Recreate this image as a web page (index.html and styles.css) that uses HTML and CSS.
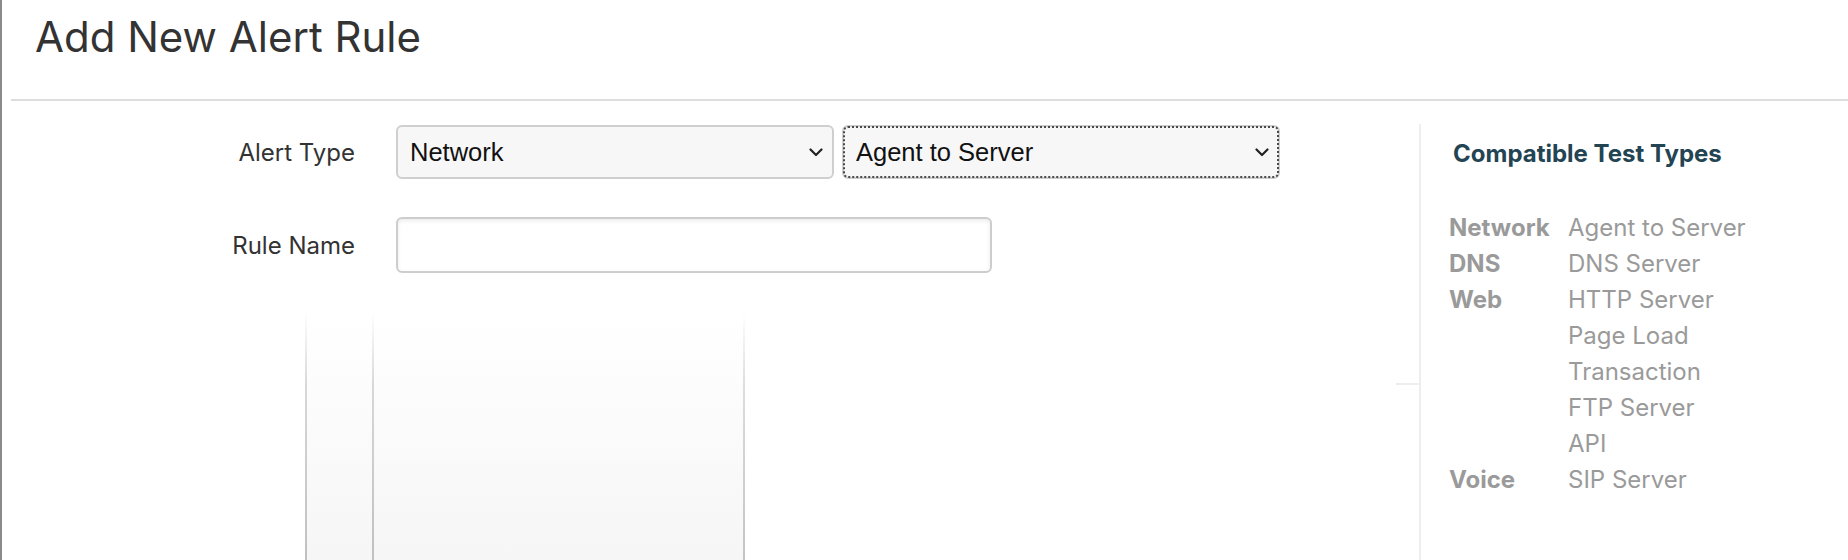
FILE: index.html
```html
<!DOCTYPE html>
<html>
<head>
<meta charset="utf-8">
<link rel="stylesheet" href="styles.css">
</head>
<body>
<div class="page">
  <header class="header">
    <h1 class="title">Add New Alert Rule</h1>
  </header>
  <div class="main">
    <div class="form-area">
      <div class="form-grid">
        <label class="label">Alert Type</label>
        <div class="selects">
          <div class="select-wrap">
            <select class="select"><option>Network</option></select>
            <svg class="chev" width="14" height="9" viewBox="0 0 14 9"><path d="M1.5 1.5 L7 7 L12.5 1.5" fill="none" stroke="#222" stroke-width="2.2" stroke-linecap="round" stroke-linejoin="round"/></svg>
          </div>
          <div class="select-wrap focused">
            <select class="select"><option>Agent to Server</option></select>
            <svg class="chev" width="14" height="9" viewBox="0 0 14 9"><path d="M1.5 1.5 L7 7 L12.5 1.5" fill="none" stroke="#222" stroke-width="2.2" stroke-linecap="round" stroke-linejoin="round"/></svg>
          </div>
        </div>
        <label class="label">Rule Name</label>
        <div><input class="text-input" type="text"></div>
      </div>
      <div class="lower">
        <div class="ghost-box">
          <div class="ghost-col narrow"></div>
          <div class="ghost-col wide"></div>
        </div>
        <div class="stub"></div>
      </div>
    </div>
    <aside class="panel">
      <h2 class="panel-title">Compatible Test Types</h2>
      <div class="types">
        <div class="cat">Network</div><div class="val">Agent to Server</div>
        <div class="cat">DNS</div><div class="val">DNS Server</div>
        <div class="cat">Web</div><div class="val">HTTP Server</div>
        <div class="cat"></div><div class="val">Page Load</div>
        <div class="cat"></div><div class="val">Transaction</div>
        <div class="cat"></div><div class="val">FTP Server</div>
        <div class="cat"></div><div class="val">API</div>
        <div class="cat">Voice</div><div class="val">SIP Server</div>
      </div>
    </aside>
  </div>
</div>
</body>
</html>
```

FILE: styles.css
```css
html, body {
  margin: 0;
  padding: 0;
  background: #fff;
  overflow: hidden;
}

body {
  font-family: "Liberation Sans", Arial, sans-serif;
  color: #333;
}

.page {
  border-left: 2px solid #8a8a8a;
  height: 560px;
  box-sizing: border-box;
  padding-left: 9px;
  display: flex;
  flex-direction: column;
}

.header {
  height: 101px;
  box-sizing: border-box;
  padding: 12px 0 0 24px;
  border-bottom: 2px solid #dddddd;
}

.title {
  margin: 0;
  font-family: Inter, "Liberation Sans", sans-serif;
  font-weight: 400;
  font-size: 42px;
  line-height: 50px;
  color: #333;
}

.main {
  flex: 1;
  display: flex;
  min-height: 0;
}

.form-area {
  flex: 1;
  display: flex;
  flex-direction: column;
  padding-top: 24px;
}

.form-grid {
  display: grid;
  grid-template-columns: 344px auto;
  column-gap: 41px;
  row-gap: 38px;
  align-items: center;
}

.label {
  text-align: right;
  font-family: Inter, "Liberation Sans", sans-serif;
  font-size: 24px;
  color: #333;
}

.selects {
  display: flex;
  gap: 8px;
}

.select-wrap {
  position: relative;
  width: 438px;
  height: 54px;
}

.select {
  -webkit-appearance: none;
  appearance: none;
  width: 100%;
  height: 100%;
  box-sizing: border-box;
  border: 2px solid #cfcfcf;
  border-radius: 6px;
  background: #f7f7f7;
  padding: 0 40px 0 12px;
  font-family: "Liberation Sans", Arial, sans-serif;
  font-size: 25.5px;
  color: #111;
  outline: none;
}

.focused .select {
  outline: 2px dotted #4a4a4a;
  outline-offset: -3px;
}

.chev {
  position: absolute;
  right: 11px;
  top: 23px;
  pointer-events: none;
}

.text-input {
  display: block;
  width: 596px;
  height: 56px;
  box-sizing: border-box;
  border: 2px solid #cdcdcd;
  border-radius: 6px;
  background: #fff;
  box-shadow: inset 0 2px 4px rgba(0, 0, 0, 0.08);
  outline: none;
  font-size: 24px;
  padding: 0 12px;
}

.lower {
  flex: 1;
  display: flex;
  margin-top: 40px;
}

.ghost-box {
  margin-left: 294px;
  width: 440px;
  display: flex;
  background: linear-gradient(to bottom, #ffffff 0%, #f6f6f6 100%);
}

.ghost-col {
  box-sizing: border-box;
  border-style: solid;
  border-width: 0;
}

.ghost-col.narrow {
  width: 69px;
  border-left-width: 2px;
  border-right-width: 2px;
  border-image: linear-gradient(to bottom, rgba(190,190,190,0) 0%, rgba(200,200,200,0.7) 30%, #c0c0c0 100%) 1;
}

.ghost-col.wide {
  flex: 1;
  border-right-width: 2px;
  border-image: linear-gradient(to bottom, rgba(200,200,200,0) 0%, rgba(200,200,200,0.6) 30%, #c4c4c4 100%) 1;
}

.stub {
  margin-left: auto;
  margin-top: 70px;
  width: 23px;
  height: 0;
  border-top: 2px solid #eeeeee;
}

.panel {
  width: 429px;
  box-sizing: border-box;
  margin-top: 23px;
  border-left: 2px solid #eeeeee;
  padding: 16px 0 0 28px;
  font-family: Inter, "Liberation Sans", sans-serif;
}

.panel-title {
  margin: 0 0 0 4px;
  font-size: 24px;
  line-height: 28px;
  font-weight: 700;
  color: #234452;
}

.types {
  margin-top: 42px;
  display: grid;
  grid-template-columns: 119px auto;
  font-size: 24px;
  line-height: 36px;
  color: #9a9a9a;
}

.cat {
  font-weight: 700;
}
```
